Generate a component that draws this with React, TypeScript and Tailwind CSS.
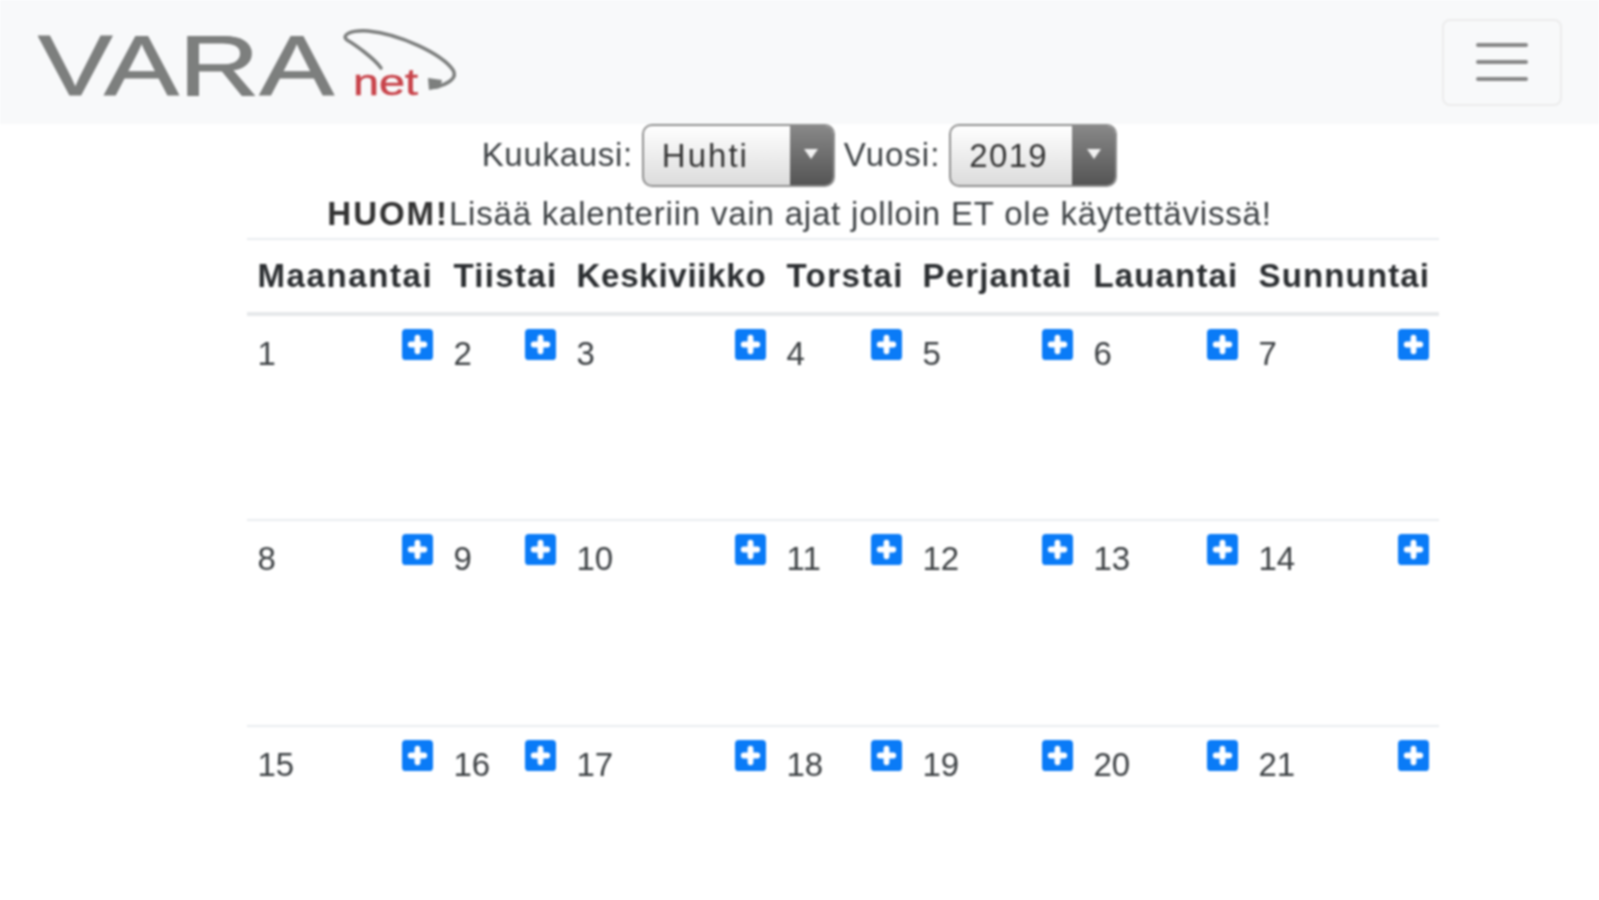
const days = [
  { name: "Maanantai", track: "tracking-[1.6px]" },
  { name: "Tiistai", track: "tracking-[1.3px]" },
  { name: "Keskiviikko", track: "tracking-[0.75px]" },
  { name: "Torstai", track: "tracking-[1.4px]" },
  { name: "Perjantai", track: "tracking-[1.15px]" },
  { name: "Lauantai", track: "tracking-[1.15px]" },
  { name: "Sunnuntai", track: "tracking-[1.15px]" },
];
const colClasses = ["w-[196px]", "w-[123px]", "w-[210px]", "w-[136px]", "w-[171px]", "w-[165px]", "w-[191px]"];
const weeks = [
  [1, 2, 3, 4, 5, 6, 7],
  [8, 9, 10, 11, 12, 13, 14],
  [15, 16, 17, 18, 19, 20, 21],
];

function PlusIcon() {
  return (
    <svg viewBox="0 0 32 32" className="float-right -mt-px block h-[31px] w-[31px]">
      <rect x="0" y="0" width="32" height="32" rx="4" fill="#0a7bf7" />
      <path d="M16 9v14M9 16h14" stroke="#ffffff" strokeWidth="6" strokeLinecap="round" />
    </svg>
  );
}

function Logo() {
  return (
    <svg width="430" height="110" viewBox="0 0 430 110" className="block">
      <text x="0" y="88" fontFamily="'Liberation Sans', sans-serif" fontSize="86" fill="#7d7f7e" stroke="#7d7f7e" strokeWidth="1" textLength="296" lengthAdjust="spacingAndGlyphs">VARA</text>
      <g transform="translate(0 21)">
        <path d="M343 40 C 336 30, 316 16, 309 12 C 303 7, 312 2, 330 3 C 362 6, 404 26, 415 42 C 420 50, 410 56, 398 59" fill="none" stroke="#7d7f7e" strokeWidth="3.5" strokeLinecap="round" />
        <path d="M390 50 L404 52 L402 60 L391 62 Z" fill="#7d7f7e" />
      </g>
      <text x="315" y="88" fontFamily="'Liberation Sans', sans-serif" fontSize="36" fill="#c8434a" stroke="#c8434a" strokeWidth="0.5" textLength="65" lengthAdjust="spacingAndGlyphs">net</text>
    </svg>
  );
}

function FakeSelect({ value, widthClass, trackClass }: { value: string; widthClass: string; trackClass: string }) {
  return (
    <div className={`flex h-[63px] ${widthClass} items-stretch overflow-hidden rounded-[10px] border-2 border-[#8f8f8f] bg-gradient-to-b from-[#ffffff] to-[#dcdcdc]`}>
      <span className={`flex-1 pl-[18px] leading-[60px] text-[#333] ${trackClass}`}>{value}</span>
      <span className="flex w-[43px] items-start justify-center bg-gradient-to-b from-[#888888] to-[#555555] pt-[22px]">
        <svg width="16" height="12" viewBox="0 0 16 12"><path d="M1 1h14L8 11z" fill="#f2f2f2" /></svg>
      </span>
    </div>
  );
}

export default function App() {
  return (
    <div className="h-[900px] overflow-hidden bg-white font-['Liberation_Sans',Arial,sans-serif] text-[33px] text-[#3c4043] blur-[1.2px]">
      <nav className="flex h-[124px] items-center justify-between bg-[#f8f9fa] pl-[38px] pr-[37px]">
        <Logo />
        <button className="flex h-[87px] w-[120px] flex-col items-center justify-center gap-[13px] rounded-lg border-2 border-[#ececec]">
          <span className="h-1 w-[52px] rounded bg-[#888]" />
          <span className="h-1 w-[52px] rounded bg-[#888]" />
          <span className="h-1 w-[52px] rounded bg-[#888]" />
        </button>
      </nav>
      <div className="flex h-[62px] items-center justify-center gap-[9px]">
        <span className="tracking-[0.7px]">Kuukausi:</span>
        <FakeSelect value="Huhti" widthClass="w-[193px]" trackClass="tracking-[2px]" />
        <span className="tracking-[1px]">Vuosi:</span>
        <FakeSelect value="2019" widthClass="w-[168px]" trackClass="tracking-[1.3px]" />
      </div>
      <p className="box-content flex h-[49px] items-center justify-center pt-[3px] tracking-[0.8px]">
        <b className="tracking-[1.95px] text-[#333]">HUOM!</b>Lisää kalenteriin vain ajat jolloin ET ole käytettävissä!
      </p>
      <table className="ml-[247px] w-[1192px] table-fixed border-collapse">
        <colgroup>
          {colClasses.map((c) => (
            <col key={c} className={c} />
          ))}
        </colgroup>
        <thead>
          <tr className="h-[75px] border-b-4 border-t-2 border-b-[#e6e8ea] border-t-[#e9ecef]">
            {days.map((d) => (
              <th key={d.name} className={`whitespace-nowrap px-[10.5px] text-left font-bold text-[#2b2e31] ${d.track}`}>{d.name}</th>
            ))}
          </tr>
        </thead>
        <tbody>
          {weeks.map((w) => (
            <tr key={w[0]} className="h-[206px] border-b-2 border-b-[#e9ecef]">
              {w.map((n) => (
                <td key={n} className="px-[10.5px] pt-[14px] align-top leading-[48px]">
                  <PlusIcon />
                  {n}
                </td>
              ))}
            </tr>
          ))}
        </tbody>
      </table>
    </div>
  );
}
